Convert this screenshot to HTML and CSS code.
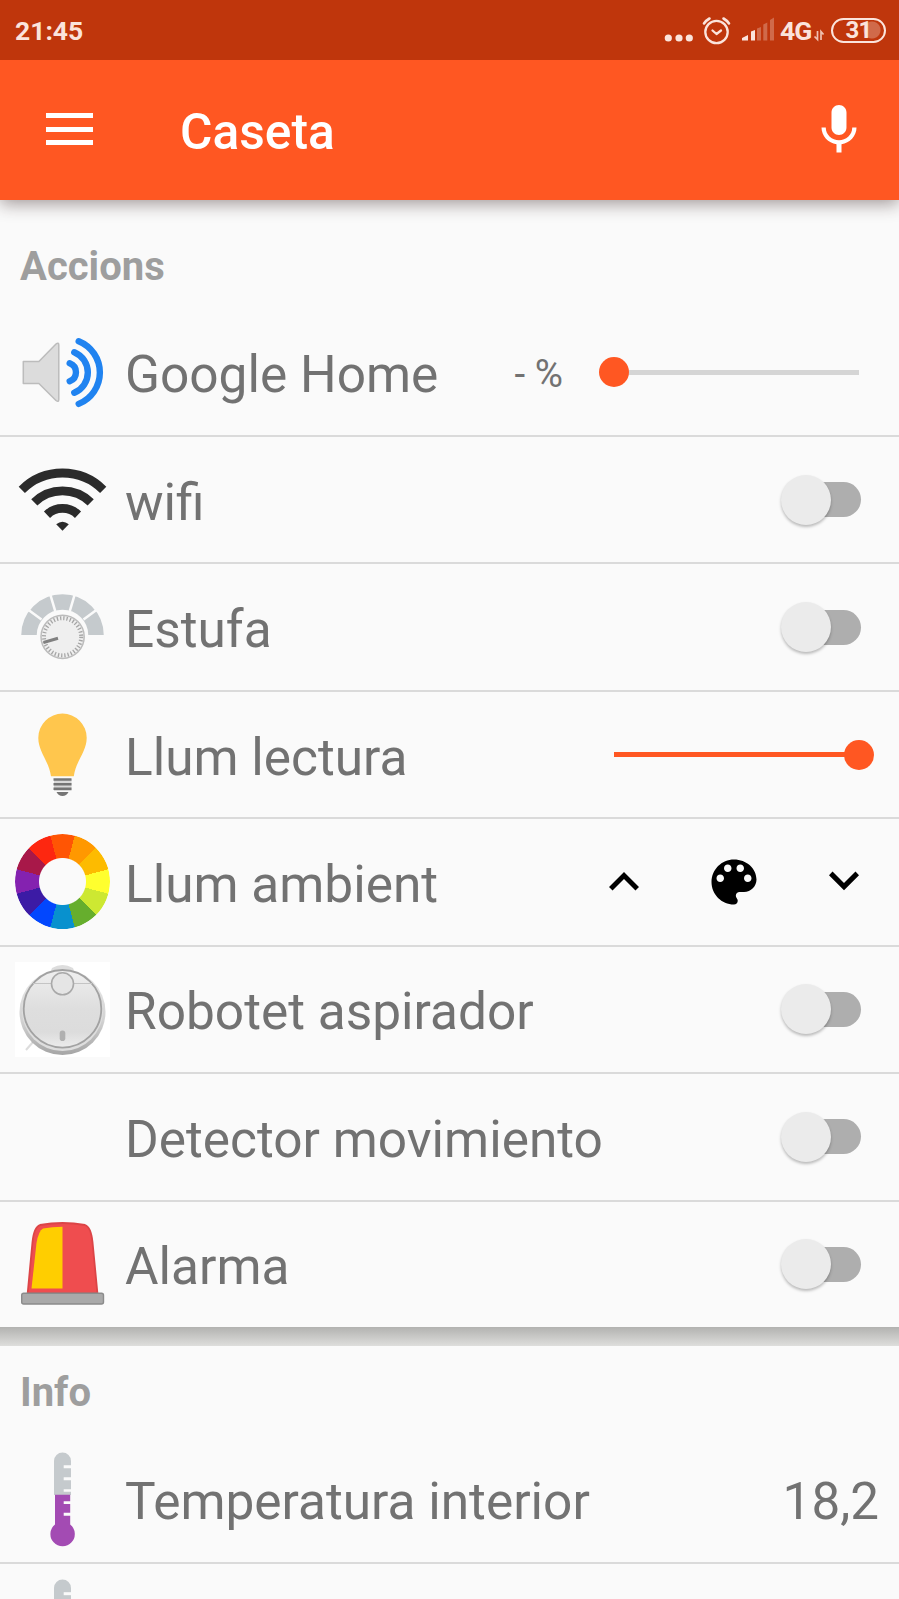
FILE: index.html
```html
<!DOCTYPE html>
<html lang="ca">
<head>
<meta charset="utf-8">
<title>Caseta</title>
<link rel="stylesheet" href="styles.css">
</head>
<body>
<div class="screen">
  <header class="status">
    <span class="clock">21:45</span>
    <svg class="status-icons" width="116" height="60" viewBox="664 0 116 60">
      <g fill="#fbe4dc"><circle cx="668.3" cy="38" r="3.6"/><circle cx="679" cy="38" r="3.6"/><circle cx="689.3" cy="38" r="3.6"/></g>
      <g fill="none" stroke="#fbe4dc" stroke-width="2.3" stroke-linecap="round" stroke-linejoin="round">
        <circle cx="716.5" cy="32" r="11.2"/><path d="M712.5 30.500l4 3.500 4.500-3.500"/><path stroke-width="2.600" d="M704 23.500q2-3 5.500-5M729 23.500q-2-3-5.500-5"/>
      </g>
      <path fill="#fbe4dc" d="M742 40.500v-2.500l6-3v5.500zM751 40.500v-9l4-1.500v10.500z"/>
      <path fill="#d06a4a" d="M757 40.500v-12l4-1.500v13.500zM763.300 40.500v-16l4-2v18zM770 40.500v-20.500l4-2.500v23z"/>
    </svg>
    <span class="net">4G</span>
    <svg class="arrows" width="12" height="60" viewBox="0 0 12 60"><path d="M4.500 31v8.500L1.500 36.500M8 40v-8.500l2.500 3" fill="none" stroke="#f0c0b0" stroke-width="1.700"/></svg>
    <span class="battery">31</span>
  </header>
  <nav class="appbar">
    <span class="menu"><i></i><i></i><i></i></span>
    <h1 class="title">Caseta</h1>
    <svg class="mic" width="60" height="60" viewBox="0 0 24 24"><path fill="#fff" d="M12 14c1.660 0 2.990-1.340 2.990-3L15 5c0-1.660-1.340-3-3-3S9 3.340 9 5v6c0 1.660 1.340 3 3 3zm5.300-3c0 3-2.540 5.100-5.300 5.100S6.700 14 6.700 11H5c0 3.410 2.720 6.230 6 6.720V21h2v-3.280c3.280-.48 6-3.300 6-6.720h-1.700z"/></svg>
  </nav>

  <section class="card actions">
    <h2 class="heading">Accions</h2>
    <div class="row">
      <svg class="icon" viewBox="0 0 95 95">
        <path d="M8.300 36.500h15.600L41 19q2.800-2 2.800 1v54.500q0 3-2.800 1L23.900 58.500H8.300z" fill="#dcdcdc" stroke="#bcbcbc" stroke-width="1.500" stroke-linejoin="round"/>
        <path d="M63.700 16.200a33.800 33.800 0 0 1 0 62.700M59.300 27.200a22 22 0 0 1 0 40.600M54.700 38.200a9.600 9.600 0 0 1 0 18" fill="none" stroke="#2083f0" stroke-width="6.400" stroke-linecap="round"/>
      </svg>
      <span class="label">Google Home</span>
      <span class="percent">- %</span>
      <span class="slider low"><i class="knob"></i></span>
    </div>
    <div class="row">
      <svg class="icon" viewBox="0 0 95 95">
        <path d="M6.800 37.800a57.700 57.700 0 0 1 81.400 0M19.300 50.300a40.400 40.400 0 0 1 56.400 0M32 62.700a22.400 22.400 0 0 1 31 0" fill="none" stroke="#2b2b2b" stroke-width="8.800"/>
        <path d="M41.200 72.300q6.300-5.200 12.600 0l-6.300 6.500z" fill="#2b2b2b"/>
      </svg>
      <span class="label">wifi</span>
      <span class="switch"></span>
    </div>
    <div class="row">
      <svg class="icon" viewBox="0 0 95 95">
        <path d="M14 55a33.500 33 0 0 1 67 0" fill="none" stroke="#c5cacd" stroke-width="15.500"/>
        <path d="M26.500 39.500L11.500 28.500M40.200 31L34.700 12.500M54.800 31L60.300 12.500M68.500 39.500L83.500 28.500" stroke="#fafafa" stroke-width="2.600"/>
        <circle cx="47.600" cy="56.800" r="21.600" fill="#efefef" stroke="#bcbcbc" stroke-width="1.500"/>
        <circle cx="47.600" cy="56.800" r="18.600" fill="none" stroke="#a5a5a5" stroke-width="4" stroke-dasharray="1.300 1.950"/>
        <path d="M28.500 62.500L43 58.200" stroke="#808080" stroke-width="3"/>
      </svg>
      <span class="label">Estufa</span>
      <span class="switch"></span>
    </div>
    <div class="row">
      <svg class="icon" viewBox="0 0 95 95">
        <path d="M36 69.300C34 54 23.300 45 23.300 30.800a24.200 24.200 0 0 1 48.400 0C71.700 45 60.700 54 58.800 69.300z" fill="#ffc64d"/>
        <path d="M39 72h17.500v12H39z" fill="#d9d9d9"/>
        <path d="M38.500 71.200h18v2.500h-18zM38.500 75.900h18v2.500h-18zM38.500 80.400h18v2.500h-18zM41.500 85h12q-2 4-6 4t-6-4z" fill="#757575"/>
      </svg>
      <span class="label">Llum lectura</span>
      <span class="slider full"><i class="knob"></i></span>
    </div>
    <div class="row">
      <span class="icon wheel"></span>
      <span class="label">Llum ambient</span>
      <span class="buttons">
        <svg width="60" height="60" viewBox="0 0 24 24"><path d="M7.410 15.410L12 10.830l4.590 4.580L18 14l-6-6-6 6z"/></svg>
        <svg width="60" height="60" viewBox="0 0 24 24"><path d="M12 3c-4.970 0-9 4.030-9 9s4.030 9 9 9c.83 0 1.500-.67 1.500-1.500 0-.39-.15-.74-.39-1.010-.23-.26-.38-.61-.38-.99 0-.83.67-1.500 1.500-1.500H16c2.760 0 5-2.240 5-5 0-4.420-4.030-8-9-8zm-5.500 9c-.83 0-1.500-.67-1.500-1.500S5.670 9 6.500 9 8 9.670 8 10.500 7.330 12 6.500 12zm3-4C8.670 8 8 7.330 8 6.500S8.670 5 9.500 5s1.500.67 1.500 1.500S10.330 8 9.500 8zm5 0c-.83 0-1.500-.67-1.500-1.500S13.670 5 14.500 5s1.500.67 1.500 1.500S15.330 8 14.500 8zm3 4c-.83 0-1.500-.67-1.500-1.500S16.670 9 17.500 9s1.500.67 1.500 1.500-.67 1.500-1.500 1.500z"/></svg>
        <svg width="60" height="60" viewBox="0 0 24 24"><path d="M7.410 7.840L12 12.420l4.590-4.580L18 9.250l-6 6-6-6z"/></svg>
      </span>
    </div>
    <div class="row">
      <svg class="icon" viewBox="0 0 95 95">
        <defs>
          <linearGradient id="body" x1="0" y1="0" x2="0" y2="1"><stop offset="0" stop-color="#efefef"/><stop offset=".5" stop-color="#dedede"/><stop offset=".8" stop-color="#dcdcdc"/><stop offset="1" stop-color="#ececec"/></linearGradient>
          <linearGradient id="rim" x1="0" y1="0" x2="0" y2="1"><stop offset="0" stop-color="#ececec"/><stop offset=".6" stop-color="#d2d2d2"/><stop offset="1" stop-color="#a5a5a5"/></linearGradient>
        </defs>
        <path d="M0 0h95v95H0z" fill="#fff"/>
        <path d="M18 80L11 88" stroke="#ddd" stroke-width="2"/>
        <path d="M37 6q10.500-6 21 0l2 5H35z" fill="#ddd"/>
        <circle cx="47.500" cy="50" r="43" fill="url(#rim)"/>
        <circle cx="47.500" cy="48.500" r="40.500" fill="#dedede"/>
        <circle cx="47.500" cy="46.800" r="38.800" fill="url(#body)" stroke="#a2a2a2" stroke-width="1.800"/>
        <path d="M18 21.500h59" stroke="#c4c4c4"/>
        <circle cx="47.500" cy="21.800" r="11" fill="#e5e5e5" stroke="#a9a9a9" stroke-width="1.600"/>
        <rect x="44.700" y="68.500" width="5.600" height="10.500" rx="2.800" fill="#b0b0b0"/>
      </svg>
      <span class="label">Robotet aspirador</span>
      <span class="switch"></span>
    </div>
    <div class="row">
      <span class="icon"></span>
      <span class="label">Detector movimiento</span>
      <span class="switch"></span>
    </div>
    <div class="row">
      <svg class="icon" viewBox="0 0 95 95">
        <path d="M12.700 76L17.500 25Q19 10 25 8q22.500-4 45 0 6 2 7.500 17L82.400 76z" fill="#ef4d4f" stroke="#dc4446" stroke-width="1.800"/>
        <path d="M16.500 71.500L21.500 26Q23.500 14 28 11.500q9-1.800 19.500-1.800v61.800z" fill="#ffce00"/>
        <rect x="6.700" y="76.200" width="81.800" height="10.800" rx="2" fill="#a9a9a9" stroke="#8b8b8b" stroke-width="1.400"/>
      </svg>
      <span class="label">Alarma</span>
      <span class="switch"></span>
    </div>
  </section>

  <div class="divider"></div>

  <section class="card">
    <h2 class="heading">Info</h2>
    <div class="row">
      <svg class="icon" viewBox="0 0 95 95">
        <path d="M39 43V9a8.500 8.500 0 0 1 17 0v34z" fill="#c5cacd"/>
        <path d="M40 42.800h15.200V72.500a12.200 12.200 0 1 1-15.200 0z" fill="#a34bb3"/>
        <path d="M48.700 13.200H57v3h-8.300zM48.700 25.200H57v3h-8.300zM48.700 37.200H57v2.600h-8.300zM48.700 49.200H57v2.800h-8.300zM48.700 60.800H57v3h-8.300z" fill="#fafafa"/>
      </svg>
      <span class="label">Temperatura interior</span>
      <span class="value">18,2</span>
    </div>
    <div class="row">
      <svg class="icon" viewBox="0 0 95 95">
        <path d="M39 43V9a8.500 8.500 0 0 1 17 0v34z" fill="#c5cacd"/>
        <path d="M48.700 13.200H57v3h-8.300z" fill="#fafafa"/>
      </svg>
    </div>
  </section>
</div>
</body>
</html>
```
FILE: styles.css
```css
* { box-sizing: border-box; }
body { margin: 0; background: #fafafa; font-family: Roboto, "Liberation Sans", sans-serif; color: #727272; }
.screen { width: 899px; height: 1599px; overflow: hidden; display: flex; flex-direction: column; }
.screen > * { flex: none; }

.status { height: 60px; background: #bf360c; color: #fbe4dc; display: flex; align-items: center; padding: 0 13px 0 15px; font-weight: 700; font-size: 26.500px; position: relative; z-index: 2; }
.clock { line-height: 60px; padding-top: 1px; }
.status-icons { margin-left: auto; }
.net { width: 33px; padding-top: 1px; letter-spacing: -1px; }
.arrows { margin-right: 6px; }
.battery { width: 55px; height: 25px; border: 2.500px solid #fbe4dc; border-radius: 13px; font-size: 24px; line-height: 20px; letter-spacing: -.8px; padding: 0 0 1px; display: flex; align-items: center; justify-content: center; background: radial-gradient(circle at 39px 10px, #d06a4a 8px, transparent 9px); }

.appbar { height: 140px; background: #ff5722; color: #fff; display: flex; align-items: center; padding: 0 30px 0 46px; box-shadow: 0 4px 16px rgba(40, 20, 20, .42); position: relative; z-index: 1; }
.menu { display: flex; flex-direction: column; gap: 8.300px; width: 47px; margin-bottom: 2px; }
.menu i { height: 5px; background: #fff; }
.title { margin: 4px auto 0 87px; font-size: 49.700px; line-height: 60px; font-weight: 500; }

.actions { padding-top: 19.500px; }
.heading { margin: 0; height: 90px; padding: 17px 0 0 20px; font-size: 40px; line-height: 60px; font-weight: 700; color: #9e9e9e; }
.row { height: 127.450px; border-bottom: 2.500px solid #dadada; display: flex; align-items: center; padding-left: 15px; }
.actions .row:last-child { border-bottom: 0; height: 125.350px; }
.icon { width: 95px; height: 95px; flex: none; }
.label { margin: 6px auto 0 15px; font-size: 51.400px; line-height: 60px; white-space: nowrap; }
.percent { font-size: 38.500px; margin: 3px 51px 0 0; line-height: 50px; }

.slider { width: 245px; height: 5px; margin: 0 40px 0 0; background: #d5d5d5; display: flex; align-items: center; }
.slider.full { background: #ff5722; justify-content: flex-end; }
.knob { width: 30px; height: 30px; border-radius: 50%; background: #ff5722; flex: none; margin: 0 -15px; }

.switch { width: 66px; height: 35px; margin: 0 38px 0 0; border-radius: 18px; background: #aeaeae; display: flex; align-items: center; }
.switch::before { content: ""; width: 50px; height: 50px; flex: none; border-radius: 50%; margin-left: -14px; background: #ebebeb; box-shadow: 0 2px 3px rgba(0, 0, 0, .26); }

.wheel { border-radius: 50%; background: conic-gradient(from -15deg, #ff5504 0 30deg, #ff9800 0 60deg, #fdbb00 0 90deg, #ffff2e 0 120deg, #cde832 0 150deg, #66ae2d 0 180deg, #0891ce 0 210deg, #0247fe 0 240deg, #3c1ba5 0 270deg, #8422b0 0 300deg, #a81849 0 330deg, #fd2710 0); -webkit-mask: radial-gradient(circle, transparent 23px, #000 24px); mask: radial-gradient(circle, transparent 23px, #000 24px); }
.buttons { display: flex; gap: 50px; margin-right: 25px; }
.divider { height: 19.500px; background: linear-gradient(#b2b2b0, #dededc); }
.value { font-size: 51.200px; line-height: 60px; margin: 6px 20px 0 0; }
```
